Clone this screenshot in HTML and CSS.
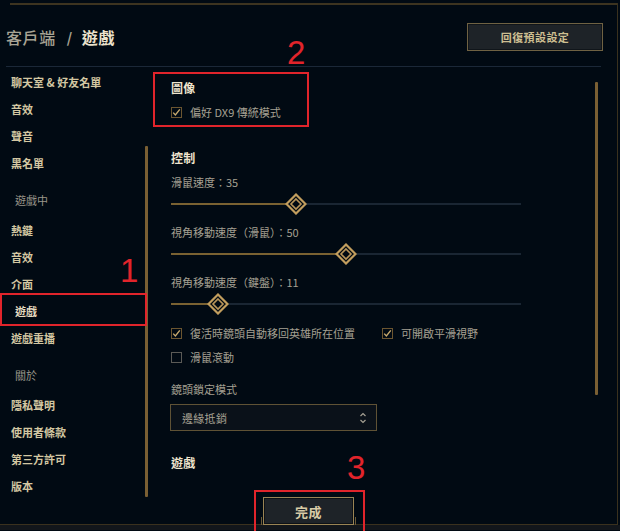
FILE: index.html
```html
<!DOCTYPE html>
<html lang="zh-Hant">
<head>
<meta charset="utf-8">
<title>客戶端 / 遊戲</title>
<link rel="stylesheet" href="styles.css">
</head>
<body>
<div class="window">
  <div class="topline"></div>
  <header class="header">
    <h1 class="title"><span class="crumb">客戶端</span><span class="sep">/</span><span class="current">遊戲</span></h1>
    <button class="btn reset">回復預設設定</button>
  </header>
  <div class="divider"></div>
  <div class="main">
    <div class="sidebar">
      <nav class="nav">
        <div class="nav-item">聊天室 &amp; 好友名單</div>
        <div class="nav-item">音效</div>
        <div class="nav-item">聲音</div>
        <div class="nav-item">黑名單</div>
        <div class="nav-head">遊戲中</div>
        <div class="nav-item">熱鍵</div>
        <div class="nav-item">音效</div>
        <div class="nav-item">介面</div>
        <div class="nav-item active">遊戲</div>
        <div class="nav-item">遊戲重播</div>
        <div class="nav-head">關於</div>
        <div class="nav-item">隱私聲明</div>
        <div class="nav-item">使用者條款</div>
        <div class="nav-item">第三方許可</div>
        <div class="nav-item">版本</div>
      </nav>
      <div class="scrollbar side-scroll"></div>
    </div>
    <div class="content">
      <h2 class="section-title">圖像</h2>
      <div class="check-row first-check">
        <label class="check"><span class="box checked"><svg viewBox="0 0 11 11"><path d="M2.2 5.6 L4.4 8 L8.8 2.4" /></svg></span><span>偏好 DX9 傳統模式</span></label>
      </div>

      <h2 class="section-title control-title">控制</h2>
      <div class="slider-group">
        <div class="slider-label">滑鼠速度：35</div>
        <div class="slider">
          <div class="track"></div>
          <div class="fill" style="width:35.7%"></div>
          <svg class="thumb" style="left:35.7%" viewBox="0 0 22 22"><polygon class="outer" points="11,1.5 20.5,11 11,20.5 1.5,11"/><polygon class="inner" points="11,6 16,11 11,16 6,11"/></svg>
        </div>
      </div>
      <div class="slider-group">
        <div class="slider-label">視角移動速度（滑鼠）：50</div>
        <div class="slider">
          <div class="track"></div>
          <div class="fill" style="width:50%"></div>
          <svg class="thumb" style="left:50%" viewBox="0 0 22 22"><polygon class="outer" points="11,1.5 20.5,11 11,20.5 1.5,11"/><polygon class="inner" points="11,6 16,11 11,16 6,11"/></svg>
        </div>
      </div>
      <div class="slider-group">
        <div class="slider-label">視角移動速度（鍵盤）：11</div>
        <div class="slider">
          <div class="track"></div>
          <div class="fill" style="width:13.4%"></div>
          <svg class="thumb" style="left:13.4%" viewBox="0 0 22 22"><polygon class="outer" points="11,1.5 20.5,11 11,20.5 1.5,11"/><polygon class="inner" points="11,6 16,11 11,16 6,11"/></svg>
        </div>
      </div>

      <div class="check-row">
        <label class="check"><span class="box checked"><svg viewBox="0 0 11 11"><path d="M2.2 5.6 L4.4 8 L8.8 2.4" /></svg></span><span>復活時鏡頭自動移回英雄所在位置</span></label>
        <label class="check"><span class="box checked"><svg viewBox="0 0 11 11"><path d="M2.2 5.6 L4.4 8 L8.8 2.4" /></svg></span><span>可開啟平滑視野</span></label>
      </div>
      <div class="check-row second">
        <label class="check"><span class="box"></span><span>滑鼠滾動</span></label>
      </div>

      <div class="field-label">鏡頭鎖定模式</div>
      <div class="select">
        <span>邊緣抵銷</span>
        <svg class="arrows" viewBox="0 0 8 12"><path d="M1.5 4 L4 1.5 L6.5 4 M1.5 8 L4 10.5 L6.5 8"/></svg>
      </div>

      <h2 class="section-title game-title">遊戲</h2>
    </div>
    <div class="scrollbar content-scroll"></div>
  </div>
  <footer class="footer">
    <button class="btn done">完成</button>
  </footer>
</div>
<div class="strip"></div>

<div class="anno box1"></div>
<div class="anno box2"></div>
<div class="anno box3"></div>
<div class="anno-num num1">1</div>
<div class="anno-num num2">2</div>
<div class="anno-num num3">3</div>
</body>
</html>
```

FILE: styles.css
```css
* { box-sizing: border-box; }

html, body {
  margin: 0;
  padding: 0;
  width: 620px;
  height: 531px;
  overflow: hidden;
  background: #010a13;
  font-family: "Noto Sans CJK TC", "Noto Sans", sans-serif;
}

.window {
  position: relative;
  width: 618px;
  margin-top: 3px;
  border-right: 1px solid #3a311e;
}

.topline {
  height: 2px;
  margin-left: 10px;
  background: #3d3420;
}

.header {
  height: 61px;
  padding: 3px 14px 0 6px;
  display: flex;
  align-items: center;
  justify-content: space-between;
}

.title {
  margin: 0;
  font-size: 16px;
  line-height: 20px;
  letter-spacing: 0.6px;
  display: flex;
  align-items: center;
}

.crumb {
  color: #a8a394;
  font-weight: 500;
}

.sep {
  color: #a8a394;
  font-weight: 700;
  margin: 0 9px 0 11px;
  font-size: 14px;
}

.current {
  color: #ece2cc;
  font-weight: 700;
}

.btn {
  font-family: "Noto Sans CJK TC", sans-serif;
  font-weight: 700;
  color: #cdbe91;
  background: #1e2328;
  cursor: pointer;
  padding: 0;
}

.reset {
  width: 136px;
  height: 28px;
  font-size: 11px;
  letter-spacing: 0.4px;
  border: 1px solid #6f6243;
  box-shadow: inset 0 0 0 1px #10151a;
}

.divider {
  height: 1px;
  margin: 0 16px 0 6px;
  background: #1b2838;
}

.main {
  height: 425px;
  display: flex;
}

.sidebar {
  display: flex;
  width: 148px;
  flex: 0 0 148px;
}

.nav {
  width: 145px;
  padding-top: 2px;
}

.nav-item {
  height: 27px;
  line-height: 27px;
  padding-left: 11px;
  font-size: 11px;
  font-weight: 700;
  color: #d3c7a2;
  white-space: nowrap;
}

.nav-item.active {
  border-left: 2px solid #c8aa6e;
  padding-left: 13px;
  color: #e6dcc0;
}

.nav-head {
  height: 27px;
  line-height: 27px;
  margin: 10px 0 3px;
  padding-left: 15px;
  font-size: 11px;
  color: #9a968a;
}

.scrollbar {
  width: 3px;
  flex: 0 0 3px;
  background: #7a5f33;
  border-radius: 1px;
}

.side-scroll {
  margin-top: 79px;
  height: 351px;
}

.content {
  width: 447px;
  flex: 0 0 447px;
  padding: 13px 0 0 23px;
}

.content-scroll {
  margin-top: 15px;
  height: 313px;
}

.section-title {
  margin: 0;
  font-size: 12px;
  line-height: 16px;
  font-weight: 700;
  color: #eee4cd;
  letter-spacing: 0.3px;
}

.control-title { margin-top: 30px; margin-bottom: 9px; }
.game-title { margin-top: 24px; }

.check-row {
  height: 16px;
  display: flex;
  align-items: center;
  gap: 27px;
}

.first-check { margin-top: 8px; }
.check-row.second { margin-top: 8px; }

.check {
  display: flex;
  align-items: center;
  gap: 8px;
  font-size: 11px;
  color: #a5a092;
  white-space: nowrap;
}

.box {
  width: 11px;
  height: 11px;
  border: 1px solid #5b5a56;
  background: #010a13;
  display: flex;
  align-items: center;
  justify-content: center;
}

.box.checked {
  border-color: #6b5530;
}

.box svg {
  width: 11px;
  height: 11px;
  flex: 0 0 11px;
}

.box svg path {
  fill: none;
  stroke: #c8aa6e;
  stroke-width: 1.4;
}

.slider-group {
  margin-bottom: 11px;
}

.slider-label,
.field-label {
  font-size: 11px;
  line-height: 14px;
  color: #a5a092;
}

.slider {
  position: relative;
  width: 350px;
  height: 20px;
  margin-top: 5px;
}

.track {
  position: absolute;
  left: 0;
  right: 0;
  top: 9px;
  height: 2px;
  background: #1a2633;
}

.fill {
  position: absolute;
  left: 0;
  top: 9px;
  height: 2px;
  background: #7a6232;
}

.thumb {
  position: absolute;
  top: -1px;
  width: 22px;
  height: 22px;
  transform: translateX(-50%);
}

.thumb .outer {
  fill: #010a13;
  stroke: #c29e5e;
  stroke-width: 2.2;
}

.thumb .inner {
  fill: #010a13;
  stroke: #b8955a;
  stroke-width: 1.6;
}

.field-label {
  margin-top: 17px;
}

.select {
  margin-top: 8px;
  margin-left: -1px;
  width: 207px;
  height: 27px;
  border: 1px solid #5f5235;
  background: #0a1119;
  display: flex;
  align-items: center;
  justify-content: space-between;
  padding: 0 9px 0 11px;
  font-size: 11px;
  color: #a5a092;
  letter-spacing: 0.3px;
}

.arrows {
  width: 8px;
  height: 12px;
}

.arrows path {
  fill: none;
  stroke: #a5a092;
  stroke-width: 1.2;
}

.footer {
  height: 33px;
  border-bottom: 1px solid #3a311e;
  display: flex;
  justify-content: center;
}

.done {
  position: relative;
  width: 91px;
  height: 28px;
  margin-top: 5px;
  font-size: 13px;
  letter-spacing: 0.5px;
  border: 1px solid #9a8454;
  box-shadow: inset 0 0 0 1px #0d1116;
  color: #d8cba6;
}

.done::before,
.done::after {
  content: "";
  position: absolute;
  bottom: -1px;
  width: 1px;
  height: 8px;
  background: #6b5a38;
}

.done::before { left: -3px; }
.done::after { right: -3px; }

.strip {
  height: 5px;
  background: #12161b;
}

.anno {
  position: absolute;
  border: 2px solid #e1242b;
}

.box1 { left: 0; top: 293px; width: 147px; height: 33px; }
.box2 { left: 153px; top: 72px; width: 156px; height: 55px; }
.box3 { left: 254px; top: 490px; width: 111px; height: 46px; }

.anno-num {
  position: absolute;
  font-family: "Liberation Sans", Arial, sans-serif;
  font-size: 33px;
  line-height: 33px;
  color: #e1242b;
}

.num1 { left: 120px; top: 254px; }
.num2 { left: 287px; top: 36px; }
.num3 { left: 347px; top: 451px; }
```
